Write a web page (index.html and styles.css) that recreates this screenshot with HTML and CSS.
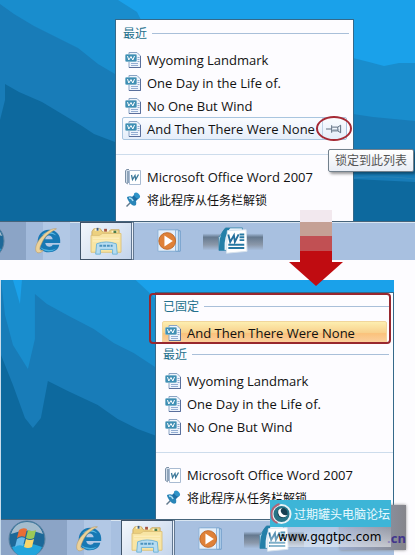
FILE: index.html
```html
<!DOCTYPE html>
<html lang="zh-CN">
<head>
    <meta charset="UTF-8">
    <meta name="viewport" content="width=device-width, initial-scale=1.0">
    <title>锁定到此列表</title>
    <link rel="stylesheet" href="styles.css">
</head>
<body>

<!-- Shared icons -->
<svg class="sprite" aria-hidden="true">
    <defs>
        <symbol id="icon-doc" viewBox="0 0 16 16">
            <path d="M4 .5h8l3.500 3.500v11.500H4z" fill="#eef4fc" stroke="#8ba4c4"/>
            <path d="M15.500 4v11.500H4" fill="none" stroke="#5a6f9c"/>
            <path d="M6 11.500h7M6 13.500h7M12.500 5.500h2M12.500 7.500h2M12.500 9.500h2" stroke="#93add2"/>
            <rect x=".5" y="2.500" width="11" height="7" rx="1" fill="#3f8fb4" stroke="#7db3cb"/>
            <path d="M2.500 4l1.300 4L6 4.500l1.800 3.500L9.500 4" fill="none" stroke="#fff"/>
        </symbol>
        <symbol id="icon-word" viewBox="0 0 16 16">
            <path d="M4 .5H1.500L.5 2v11.500L3 15" fill="#d5e0ec" stroke="#7c90a6"/>
            <path d="M3 2v12" stroke="#8fa4ba" stroke-width="2"/>
            <path d="M4.500 1.500h11v14h-11z" fill="#fff" stroke="#a9bbd2"/>
            <path d="M6.500 6l1 4.500L10 6.500l.7 4L13.500 5.500" fill="none" stroke="#3b7899" stroke-width="1.300"/>
        </symbol>
        <symbol id="icon-unpin" viewBox="0 0 16 16">
            <path d="M6 10l-4.500 4.500" stroke="#61788c" stroke-width="1.500"/>
            <path d="M2 5q4-2 7 1t2 7q-3 2-6-2T2 5z" fill="#2a85b8"/>
            <path d="M7 5l3-3 4 4-3 3q-3 0-4-4z" fill="#1d6ea5"/>
            <ellipse cx="12" cy="3.500" rx="2.300" ry="3.500" transform="rotate(-45 12 3.500)" fill="#2f93c8"/>
            <path d="M4 6q3 0 4 3" fill="none" stroke="#a8dcf3" stroke-width="1.500"/>
        </symbol>
        <symbol id="icon-ie" viewBox="0 0 32 32">
            <path d="M17 4C9 4 5 10 5 17s5 11 12 11c6 0 10-3 11-8h-7c-1 3-7 3-8-2h16C30 9 24 4 17 4zm-4 10c1-5 7-5 8 0z" fill="#1778b4" fill-rule="evenodd"/>
            <path d="M9 10q8-8 16 0-8-4-16 0z" fill="#5dbbe4"/>
            <path d="M7 22q8 6 18 2-7 6-15 1z" fill="#4bb1df"/>
            <path d="M25 3C17 1 1 17 3 26c1 4 5 3 8 0-4 1-5-1-2-7C13 10 18 7 25 3z" fill="#ecd29a" stroke="#b79763" stroke-width=".6"/>
        </symbol>
        <symbol id="icon-folder" viewBox="0 0 34 32">
            <path d="M2 6l2-3h7l2 3h7l2-2h9v22H2z" fill="#ecd07e" stroke="#c9ab66"/>
            <path d="M5 4h5M14 5h6M23 6h6" stroke="#fff5cf" stroke-width="2"/>
            <path d="M7 2h2v3H7z" fill="#3a5a84"/>
            <path d="M15 3h3v3h-3z" fill="#a65342"/>
            <path d="M25 5h3v3h-3z" fill="#4c7d4a"/>
            <path d="M1 10h9l3-2h20v20H1z" fill="#f8e5a4" stroke="#dec27a"/>
            <path d="M3 13h28M3 16h28" stroke="#fff1c6"/>
            <path d="M6 30l1-11q10-4 21 0l1 11h-5v-5H11v5z" fill="#b7dcf1" stroke="#6db3d8"/>
            <path d="M10 21h14" stroke="#4b92bf" stroke-width="2" stroke-dasharray="3 1"/>
        </symbol>
        <symbol id="icon-media" viewBox="0 0 28 28">
            <path d="M5 3h20v22H5z" fill="#c1dcf3" stroke="#6897c5"/>
            <path d="M3 2h20v23H3z" fill="#d8eafa" stroke="#72a1cc"/>
            <path d="M1 2h19v23H1z" fill="#e4effa" stroke="#8bb0d6"/>
            <circle cx="11" cy="14" r="9" fill="#df8138" stroke="#bd6829"/>
            <path d="M8 8v12l9-6z" fill="#fff"/>
        </symbol>
        <symbol id="icon-word-app" viewBox="0 0 32 32">
            <path d="M8 2h18v24H1V12z" fill="#e8f2fa" stroke="#4a91b4"/>
            <path d="M8 2Q1 7 1 26h6Q6 10 13 2z" fill="#247fa8"/>
            <path d="M10 5l20-1 1 23-22 2z" fill="#fff" stroke="#d6e2ed"/>
            <path d="M11 9l2 8 4-7 1 7 4-8" fill="none" stroke="#246f9c" stroke-width="2"/>
            <path d="M23 9h5M23 12h5M23 15h5M11 20h17M11 23.500h17" stroke="#2678a2" stroke-width="2"/>
        </symbol>
        <symbol id="icon-start" viewBox="0 0 38 38">
            <circle cx="19" cy="19" r="18" fill="#1c6898" stroke="#5a819f"/>
            <path d="M3 14Q7 2 19 2t16 12q-16-7-32 0z" fill="#a4bccd"/>
            <path d="M4 27q15-7 30 0-4 10-15 10T4 27z" fill="#22a4dc"/>
            <path d="M11 10q4-3 8-1l-2 8q-4-2-8 1z" fill="#e96e35"/>
            <path d="M20 10q4 2 8 0l-2 8q-4 2-8 0z" fill="#9cc957"/>
            <path d="M9 19q4-3 8-1l-2 8q-4-2-8 1z" fill="#69bae9"/>
            <path d="M18 19q4 2 8 0l-2 8q-4 2-8 0z" fill="#f9d66a"/>
        </symbol>
        <symbol id="icon-pin" viewBox="0 0 18 10">
            <path d="M0 5h6M6 1v8M6.500 3h6v4h-6M12.500 3l3-2v8l-3-2" fill="none" stroke="#566779"/>
            <path d="M7 5.500h7v1H7z" fill="#8797a8"/>
        </symbol>
    </defs>
</svg>

<main class="page">
    <section class="scene scene-before">
        <div class="desktop">
            <svg class="wallpaper" viewBox="0 0 415 221" preserveAspectRatio="none" aria-hidden="true">
                <path fill="#1aa1ea" d="M0 0h415v221H0z"/>
                <path fill="#198dcd" d="M0 0h118l19 12 5 10 211 36 16 4 15 4 15-3h16v158H0z"/>
                <path fill="#187cb8" d="M0 4l14 10 20 12 24 12 20 10 20 16 17 10 238 40 20 3 42 4v100H0z"/>
                <path fill="#0d699e" d="M0 120l5-20V84l14 8 23 10 20 12 20 12 12 8 21 8 238 37 62 3v39H0z"/>
                <path fill="none" stroke="#2982b6" d="M353 178q30-3 62 1"/>
            </svg>
            <div class="menu">
                <h2 class="menu-title">最近</h2>
                <ul class="menu-list">
                    <li><a class="item" href="#"><svg class="icon"><use href="#icon-doc"/></svg>Wyoming Landmark</a></li>
                    <li><a class="item" href="#"><svg class="icon"><use href="#icon-doc"/></svg>One Day in the Life of.</a></li>
                    <li><a class="item" href="#"><svg class="icon"><use href="#icon-doc"/></svg>No One But Wind</a></li>
                    <li class="hovered">
                        <a class="item" href="#"><svg class="icon"><use href="#icon-doc"/></svg>And Then There Were None</a>
                        <button class="pin" aria-label="锁定到此列表"><svg class="pin-icon"><use href="#icon-pin"/></svg></button>
                        <span class="tooltip">锁定到此列表</span>
                    </li>
                </ul>
                <ul class="menu-list menu-tasks">
                    <li><a class="item" href="#"><svg class="icon"><use href="#icon-word"/></svg>Microsoft Office Word 2007</a></li>
                    <li><a class="item item-cn" href="#"><svg class="icon"><use href="#icon-unpin"/></svg>将此程序从任务栏解锁</a></li>
                </ul>
            </div>
        </div>
        <nav class="taskbar">
            <button class="start" aria-label="开始"><svg><use href="#icon-start"/></svg></button>
            <button class="task task-ie" aria-label="Internet Explorer"><svg><use href="#icon-ie"/></svg></button>
            <button class="task task-folder" aria-label="Explorer"><svg><use href="#icon-folder"/></svg></button>
            <button class="task task-media" aria-label="Media Player"><svg><use href="#icon-media"/></svg></button>
            <button class="task task-word" aria-label="Word"><svg><use href="#icon-word-app"/></svg></button>
        </nav>
        <svg class="arrow" viewBox="0 0 54 76" aria-hidden="true">
            <path fill="#f2e8ee" d="M11 0h32v12H11z"/>
            <path fill="#c5a095" d="M11 12h32v14H11z"/>
            <path fill="#c15053" d="M11 26h32v15H11z"/>
            <path fill="#c00c11" d="M11 41h32v11h11L27 76 0 52h11z"/>
        </svg>
    </section>

    <section class="scene scene-after">
        <div class="desktop">
            <svg class="wallpaper" viewBox="0 0 394 239" preserveAspectRatio="none" aria-hidden="true">
                <path fill="#1aa1ea" d="M0 0h394v239H0z"/>
                <path fill="#198dcd" d="M0 0h135l13 12 8 8v219H0z"/>
                <path fill="#187cb8" d="M0 0l4 35 8 30 15 24 7-30V14l12 10 22 12 25 13 20 14 20 10 23 15v151H0z"/>
                <path fill="#1aa1ea" d="M12 0h9l-2 24z"/>
                <path fill="#0d699e" d="M0 75l12 30 12 33 8 10 8-10 7-37 20 10 30 14 20 14 20 10 19 7v83H0z"/>
            </svg>
            <div class="menu">
                <div class="pinned">
                    <h2 class="menu-title">已固定</h2>
                    <ul class="menu-list">
                        <li class="selected"><a class="item" href="#"><svg class="icon"><use href="#icon-doc"/></svg>And Then There Were None</a></li>
                    </ul>
                </div>
                <h2 class="menu-title">最近</h2>
                <ul class="menu-list">
                    <li><a class="item" href="#"><svg class="icon"><use href="#icon-doc"/></svg>Wyoming Landmark</a></li>
                    <li><a class="item" href="#"><svg class="icon"><use href="#icon-doc"/></svg>One Day in the Life of.</a></li>
                    <li><a class="item" href="#"><svg class="icon"><use href="#icon-doc"/></svg>No One But Wind</a></li>
                </ul>
                <ul class="menu-list menu-tasks">
                    <li><a class="item" href="#"><svg class="icon"><use href="#icon-word"/></svg>Microsoft Office Word 2007</a></li>
                    <li><a class="item item-cn" href="#"><svg class="icon"><use href="#icon-unpin"/></svg>将此程序从任务栏解锁</a></li>
                </ul>
            </div>
        </div>
        <nav class="taskbar">
            <button class="start" aria-label="开始"><svg><use href="#icon-start"/></svg></button>
            <button class="task task-ie" aria-label="Internet Explorer"><svg><use href="#icon-ie"/></svg></button>
            <button class="task task-folder" aria-label="Explorer"><svg><use href="#icon-folder"/></svg></button>
            <button class="task task-media" aria-label="Media Player"><svg><use href="#icon-media"/></svg></button>
            <button class="task task-word" aria-label="Word"><svg><use href="#icon-word-app"/></svg></button>
        </nav>
        <div class="watermark">
            <span class="watermark-shade">.cn</span>
            <div class="watermark-name">
                <svg viewBox="0 0 22 22" aria-hidden="true">
                    <circle cx="11" cy="11" r="9" fill="#277486" stroke="#e8f2f5" stroke-width="2"/>
                    <path d="M9 1Q1 4 1 11t6 9" fill="none" stroke="#ae6377" stroke-width="2"/>
                    <circle cx="12" cy="10" r="5" fill="#173f50"/>
                    <path d="M9 13q-4-7 3-8-3 2-1 5t6 2q-3 4-8 1z" fill="#fff"/>
                </svg>
                过期罐头电脑论坛
            </div>
            <div class="watermark-url">www.gqgtpc.com</div>
        </div>
    </section>
</main>

</body>
</html>
```

FILE: styles.css
```css
* {
    box-sizing: border-box;
}

body {
    margin: 0;
    background-color: #fdfcff;
    color: #111;
    font-family: "Open Sans", "Noto Sans CJK SC", sans-serif;
    font-size: 13px;
}

.sprite {
    position: absolute;
    width: 0;
    height: 0;
}

.page {
    height: 100vh;
    display: flex;
    flex-direction: column;
    gap: 20px;
    overflow: hidden;
}

.scene {
    position: relative;
    flex-shrink: 0;
}

.scene-after {
    margin-right: 21px;
    border-left: 1px solid #c8dcec;
}

.desktop {
    position: relative;
    display: flex;
    justify-content: flex-end;
}

.scene-before .desktop {
    padding: 19px 61px 0 0;
}

.scene-after .desktop {
    padding-top: 12px;
}

.wallpaper {
    position: absolute;
    inset: 0;
    width: 100%;
    height: 100%;
}

/* Jump list */
.menu {
    position: relative;
    width: 239px;
    padding: 3px 0 10px;
    background-color: #fdfcff;
    border: 1px solid #35698a;
    border-bottom: none;
}

.menu-title {
    display: flex;
    align-items: center;
    gap: 5px;
    margin: 0;
    padding: 0 4px 0 7px;
    height: 20px;
    color: #24708c;
    font-size: 12px;
    font-weight: normal;
}

.menu-title::after {
    content: "";
    flex: 1;
    height: 1px;
    background-color: #a9bfd9;
}

.menu-list {
    list-style: none;
    margin: 0;
    padding: 5px 6px 0;
}

.menu-list li {
    position: relative;
    display: flex;
    height: 23px;
    border: 1px solid transparent;
    border-radius: 2px;
}

.item {
    flex: 1;
    display: flex;
    align-items: center;
    gap: 6px;
    padding-left: 2px;
    color: inherit;
    text-decoration: none;
    white-space: nowrap;
}

.item-cn {
    font-size: 12px;
}

.icon {
    width: 16px;
    height: 16px;
}

.menu-tasks {
    margin-top: 14px;
    padding-top: 10px;
    border-top: 1px solid #cddcec;
}

.menu-list .hovered {
    background: linear-gradient(#fafcff, #e5eefa);
    border-color: #a9c5df;
}

.pin {
    position: relative;
    width: 24px;
    padding: 0;
    background: none;
    border: none;
    border-left: 1px solid #bed2e6;
}

.pin::after {
    content: "";
    position: absolute;
    inset: -2px -6px -2px -7px;
    border: 2px solid #a62a35;
    border-radius: 50%;
}

.pin-icon {
    display: block;
    width: 17px;
    height: 10px;
    margin: auto;
}

.tooltip {
    position: absolute;
    top: 31px;
    left: 205px;
    z-index: 2;
    padding: 0 6px;
    line-height: 21px;
    background: linear-gradient(#fff, #e9edf5);
    border: 1px solid #72808c;
    border-radius: 2px;
    box-shadow: 2px 2px 3px rgba(0, 0, 0, 0.4);
    color: #555;
    font-size: 12px;
    white-space: nowrap;
}

/* Pinned group */
.pinned {
    position: relative;
}

.pinned::after {
    content: "";
    position: absolute;
    inset: -3px 2px 0 -7px;
    border: 2px solid #98272e;
    border-radius: 4px;
}

.menu-list .selected {
    background: linear-gradient(#fdeeb0, #f8d18d 50%, #fac27c 55%, #fbd0a0);
    border-color: #f1d69b;
}

/* Taskbar */
.taskbar {
    display: flex;
    align-items: center;
    height: 39px;
    background-color: #a8c0e0;
    border-top: 1px solid #47647b;
    box-shadow: inset 0 1px #d8e5f1;
    overflow: hidden;
}

.taskbar button {
    flex-shrink: 0;
    display: flex;
    align-items: center;
    justify-content: center;
    height: 38px;
    padding: 0;
    background: none;
    border: none;
}

.taskbar svg {
    width: 32px;
    height: 30px;
}

.taskbar .start {
    width: 66px;
    padding-right: 14px;
    background-color: #8ba4c6;
}

.taskbar .start svg {
    width: 38px;
    height: 38px;
}

.scene-before .start {
    margin-left: -40px;
}

.taskbar .task-ie {
    width: 44px;
    background: linear-gradient(90deg, #a2badb 38%, #b2c8e5 38%);
}

.taskbar .task-folder {
    width: 54px;
    margin-left: 10px;
    background: linear-gradient(135deg, #f3f7fc, #c3d4eb);
    border: 1px solid #40546a;
    border-right: 3px double #617791;
}

.taskbar .task-folder svg {
    width: 34px;
}

.taskbar .task-media {
    width: 40px;
    margin-left: 16px;
}

.taskbar .task-media svg {
    width: 28px;
    height: 26px;
}

.taskbar .task-word {
    width: 60px;
    margin-left: 13px;
    background: linear-gradient(transparent 30%, #65798f 40%, #8b98aa 60%, transparent 75%);
}

.arrow {
    position: absolute;
    right: 72px;
    bottom: -26px;
    z-index: 1;
    width: 54px;
    height: 76px;
}

/* Site watermark */
.watermark {
    position: absolute;
    top: 220px;
    right: 3px;
    width: 121px;
}

.watermark-name {
    position: relative;
    display: flex;
    align-items: center;
    gap: 1px;
    height: 27px;
    background-color: #3db5d7;
    color: #eafaff;
    font-size: 12px;
    white-space: nowrap;
}

.watermark-name svg {
    width: 23px;
    height: 22px;
}

.watermark-url {
    position: relative;
    padding-left: 8px;
    line-height: 20px;
    background: linear-gradient(rgba(255, 255, 255, 0.1), rgba(255, 255, 255, 0.5));
    color: #000;
    font-family: "DejaVu Sans", sans-serif;
    font-size: 12px;
}

.watermark-shade {
    position: absolute;
    top: 5px;
    right: -15px;
    width: 66px;
    height: 45px;
    background: linear-gradient(90deg, #9aabce, #85858b);
    box-shadow: 0 0 3px #888;
    color: #41358c;
    font-weight: bold;
    line-height: 66px;
    text-align: right;
}
```
